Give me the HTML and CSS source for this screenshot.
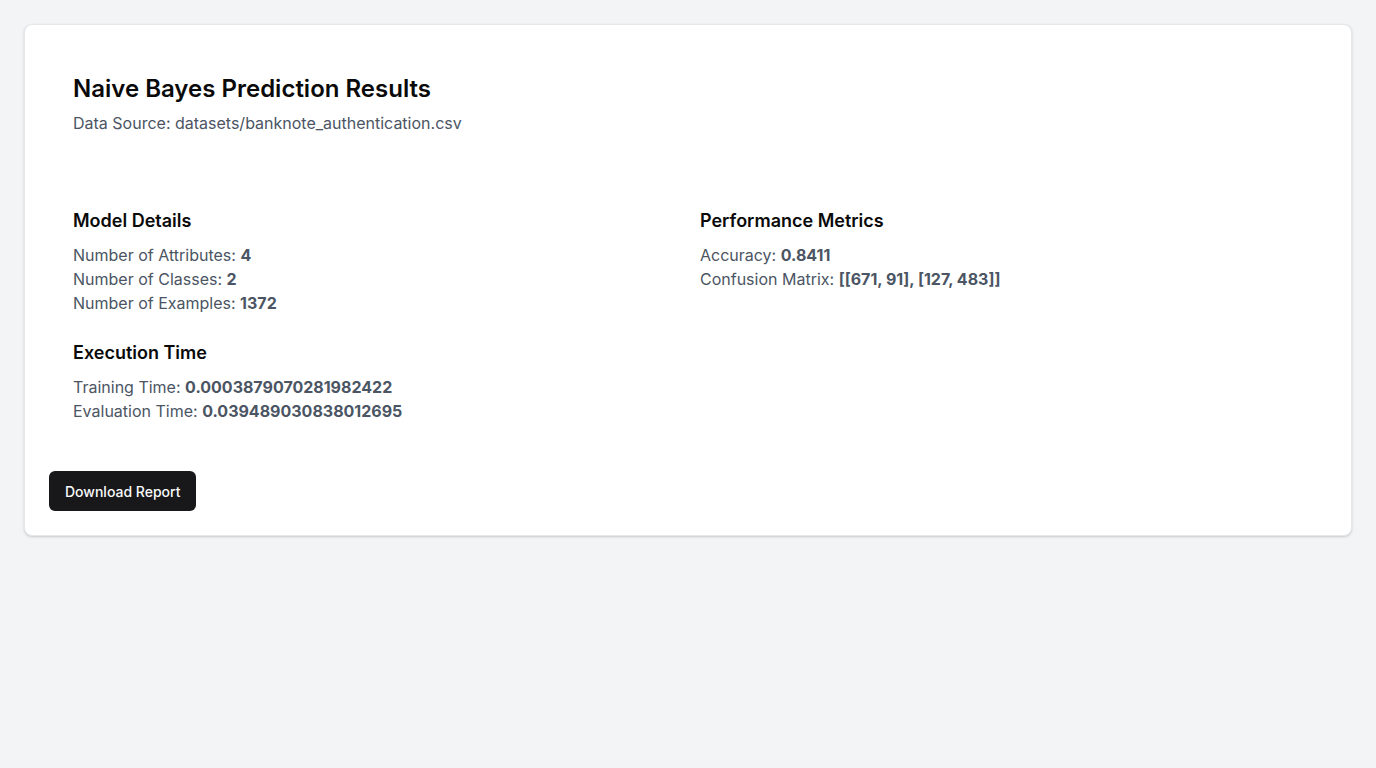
FILE: index.html
```html
<!DOCTYPE html>
<html lang="en">
<head>
<meta charset="utf-8">
<title>Naive Bayes Prediction Results</title>
<link rel="stylesheet" href="styles.css">
</head>
<body>
<div class="page">
  <div class="card">
    <div class="card-header">
      <div class="header-inner">
        <h1 class="title">Naive Bayes Prediction Results</h1>
        <p class="subtitle">Data Source: datasets/banknote_authentication.csv</p>
      </div>
    </div>
    <div class="card-content">
      <div class="grid">
        <div class="col">
          <section class="section">
            <h3 class="section-title">Model Details</h3>
            <p class="row">Number of Attributes: <strong>4</strong></p>
            <p class="row">Number of Classes: <strong>2</strong></p>
            <p class="row">Number of Examples: <strong>1372</strong></p>
          </section>
          <section class="section">
            <h3 class="section-title">Execution Time</h3>
            <p class="row">Training Time: <strong>0.0003879070281982422</strong></p>
            <p class="row">Evaluation Time: <strong>0.039489030838012695</strong></p>
          </section>
        </div>
        <div class="col">
          <section class="section">
            <h3 class="section-title">Performance Metrics</h3>
            <p class="row">Accuracy: <strong>0.8411</strong></p>
            <p class="row">Confusion Matrix: <strong>[[671, 91], [127, 483]]</strong></p>
          </section>
        </div>
      </div>
    </div>
    <div class="card-footer">
      <button class="btn" type="button">Download Report</button>
    </div>
  </div>
</div>
</body>
</html>
```
FILE: styles.css
```css
* { box-sizing: border-box; }
html, body { margin: 0; padding: 0; }
body {
  background: #f3f4f6;
  font-family: Inter, "Noto Sans", "Liberation Sans", sans-serif;
  color: #09090b;
  min-height: 768px;
}
.page { padding: 24px; }
.card {
  background: #ffffff;
  border: 1px solid #e5e7eb;
  border-radius: 8px;
  box-shadow: 0 1px 3px rgba(0,0,0,0.12), 0 1px 2px rgba(0,0,0,0.06);
}
.card-header { padding: 24px; }
.header-inner { padding: 24px; }
.title {
  margin: 0;
  font-size: 24px;
  line-height: 32px;
  font-weight: 600;
  color: #0a0a0a;
}
.subtitle {
  margin: 6px 0 0;
  font-size: 16px;
  line-height: 24px;
  color: #4b5563;
}
.card-content { padding: 0 24px 24px; }
.grid {
  display: grid;
  grid-template-columns: 1fr 1fr;
  column-gap: 24px;
  padding: 24px;
}
.col { display: flex; flex-direction: column; gap: 24px; }
.section-title {
  margin: 0 0 8px;
  font-size: 18px;
  line-height: 28px;
  font-weight: 600;
  color: #0a0a0a;
}
.row {
  margin: 0;
  font-size: 16px;
  line-height: 24px;
  color: #4b5563;
}
.row strong { font-weight: 700; color: #4b5563; }
.card-footer { padding: 0 24px 24px; display: flex; }
.btn {
  height: 40px;
  padding: 0 16px;
  border: none;
  border-radius: 6px;
  background: #18181b;
  color: #fafafa;
  font-family: Inter, "Noto Sans", sans-serif;
  font-size: 14px;
  font-weight: 500;
  cursor: pointer;
}
```
